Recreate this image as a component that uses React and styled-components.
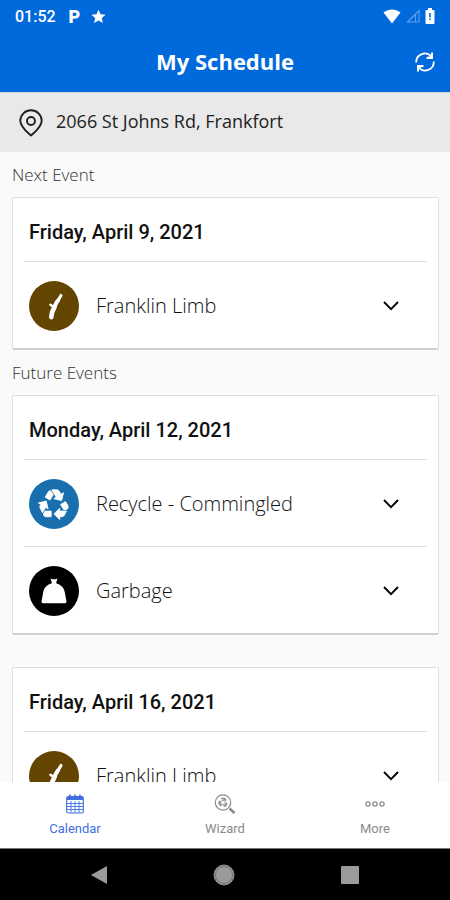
import React from 'react';
import styled, { createGlobalStyle, css } from 'styled-components';
import { MdRecycling } from 'react-icons/md';

const GlobalStyle = createGlobalStyle`
    * {
        box-sizing: border-box;
    }
    body {
        margin: 0;
        background: #fafafa;
        font-family: 'Open Sans', 'Noto Sans', sans-serif;
    }
    h1, h2, h3, p {
        margin: 0;
        padding: 0;
    }
    button {
        padding: 0;
        border: 0;
        background: none;
        color: inherit;
        font: inherit;
        cursor: pointer;
    }
`;

const StarIcon = () => (
    <svg width="15" height="15" viewBox="0 0 24 24" fill="currentColor" aria-hidden="true">
        <path d="M12 1l3.3 7.3 8 .8-6 5.3 1.7 7.9L12 18.2 5 22.3l1.7-7.9-6-5.3 8-.8z" />
    </svg>
);

const WifiIcon = () => (
    <svg width="18" height="15" viewBox="0 0 18 15" fill="currentColor" aria-hidden="true">
        <path d="M0.5 3.6C5.5 -0.4 12.5 -0.4 17.5 3.6L9 14.5z" />
    </svg>
);

const SignalIcon = () => (
    <svg width="14" height="14" viewBox="0 0 14 14" fill="none" stroke="#5c9dec" strokeWidth="1.2" aria-hidden="true">
        <path d="M1.5 13H13V1.5zM9.5 5.5V13" />
    </svg>
);

const BatteryIcon = () => (
    <svg width="10" height="16" viewBox="0 0 10 16" aria-hidden="true">
        <path d="M3 0h4v2h1.5a1 1 0 0 1 1 1v12a1 1 0 0 1-1 1h-7a1 1 0 0 1-1-1V3a1 1 0 0 1 1-1H3z" fill="#fff" />
        <path d="M4.2 5h1.6v4.5H4.2zM4.2 10.5h1.6V12H4.2z" fill="#0069dc" />
    </svg>
);

const RefreshIcon = () => (
    <svg width="20" height="20" viewBox="0 0 20 20" fill="none" stroke="currentColor" strokeWidth="1.8" aria-hidden="true">
        <path d="M1.2 10.5A8.6 8.6 0 0 1 16.5 4.8" />
        <path d="M18.8 9.5A8.6 8.6 0 0 1 3.5 15.2" />
        <path d="M18 0.5V7H11.5V5L14.5 4.5L16 3V0.5zM2 19.5V13H8.5V15L5.5 15.5L4 17V19.5z" fill="currentColor" stroke="none" />
    </svg>
);

const PinIcon = () => (
    <svg width="24" height="28" viewBox="0 0 24 28" fill="none" stroke="currentColor" strokeWidth="1.9" strokeLinejoin="round" aria-hidden="true">
        <path d="M12 26.6C9 23.8 1.3 18 1.3 11.7a10.7 10.4 0 0 1 21.4 0C22.7 18 15 23.8 12 26.6z" />
        <circle cx="12" cy="12" r="4" />
    </svg>
);

const LimbIcon = () => (
    <svg width="30" height="30" viewBox="0 0 30 30" fill="none" stroke="#fff" strokeLinecap="round" strokeLinejoin="round" aria-hidden="true">
        <path d="M12.3 26.2L13 21.5L15.5 16" strokeWidth="4.6" />
        <path d="M15 17L17.5 11.5L19 9.5" strokeWidth="4" />
        <path d="M19 9.5L22 4.5" strokeWidth="3.2" />
        <path d="M14.5 16L11.5 13.8" strokeWidth="2.6" />
    </svg>
);

const GarbageIcon = () => (
    <svg width="26" height="26" viewBox="0 0 26 26" fill="#fff" aria-hidden="true">
        <path d="M9.5 0.5L11.5 1.3H14.5L16.5 0.5L15.5 3.5L15.2 5.3C20.5 7 23.6 10.5 24 15.5L25.5 23.5Q25.6 25.3 24 25.3H2Q0.4 25.3 0.5 23.5L2 15.5C2.4 10.5 5.5 7 10.8 5.3L10.5 3.5z" />
    </svg>
);

const RecycleIcon = styled(MdRecycling)`
    width: 34px;
    height: 34px;
    color: #fff;

    path:not([fill='none']) {
        stroke: #fff;
        stroke-width: 0.6px;
    }
`;

const ChevronIcon = () => (
    <svg width="16" height="10" viewBox="0 0 16 10" fill="none" stroke="currentColor" strokeWidth="1.9" aria-hidden="true">
        <path d="M1 1L8 8.2L15 1" />
    </svg>
);

const CalendarIcon = () => (
    <svg width="18" height="20" viewBox="0 0 18 20" fill="none" stroke="currentColor" aria-hidden="true">
        <rect x="0.7" y="2.5" width="16.6" height="16.5" rx="1.5" strokeWidth="1.1" />
        <path d="M1 3h16v3H1z" fill="currentColor" stroke="none" />
        <path d="M4 0.5v3.5M9 0.5v3.5M14 0.5v3.5" strokeWidth="1.6" />
        <path d="M1 9.5h16M1 12.5h16M1 15.5h16M5 7v11.5M9 7v11.5M13 7v11.5" strokeWidth="0.9" />
    </svg>
);

const WizardIcon = () => (
    <svg width="22" height="20" viewBox="0 0 22 20" fill="none" stroke="currentColor" aria-hidden="true">
        <circle cx="9" cy="8.5" r="7.7" strokeWidth="1.2" />
        <path d="M7.3 4.7h3.4l1.2 2M13 9l-1.7 3H9.5M7.3 12L5 9l1.2-2.2" strokeWidth="1.7" />
        <circle cx="9" cy="8.6" r="2.2" strokeWidth="0.8" />
        <path d="M15.5 14.5L20.5 19" strokeWidth="2.6" />
    </svg>
);

const MoreIcon = () => (
    <svg width="20" height="20" viewBox="0 0 20 20" fill="none" stroke="currentColor" strokeWidth="1.3" aria-hidden="true">
        <circle cx="3" cy="10" r="2.1" />
        <circle cx="10" cy="10" r="2.1" />
        <circle cx="17" cy="10" r="2.1" />
    </svg>
);

const kinds = {
    limb: { color: '#634400', icon: <LimbIcon /> },
    recycle: { color: '#196fae', icon: <RecycleIcon /> },
    garbage: { color: '#000', icon: <GarbageIcon /> },
};

const nextEvents = [
    { date: 'Friday, April 9, 2021', pickups: [{ name: 'Franklin Limb', kind: 'limb' }] },
];

const futureEvents = [
    {
        date: 'Monday, April 12, 2021',
        pickups: [
            { name: 'Recycle - Commingled', kind: 'recycle' },
            { name: 'Garbage', kind: 'garbage' },
        ],
    },
    { date: 'Friday, April 16, 2021', pickups: [{ name: 'Franklin Limb', kind: 'limb' }] },
];

const tabs = [
    { label: 'Calendar', icon: <CalendarIcon />, active: true },
    { label: 'Wizard', icon: <WizardIcon /> },
    { label: 'More', icon: <MoreIcon /> },
];

const EventCard = ({ date, pickups }) => (
    <Card>
        <CardDate>{date}</CardDate>
        {pickups.map(({ name, kind }) => (
            <PickupRow key={name}>
                <Badge $color={kinds[kind].color}>{kinds[kind].icon}</Badge>
                <PickupName>{name}</PickupName>
                <ExpandButton type="button" aria-label={`Show ${name}`}>
                    <ChevronIcon />
                </ExpandButton>
            </PickupRow>
        ))}
    </Card>
);

const App = () => {
    return (
        <Screen>
            <GlobalStyle />
            <TopBar>
                <StatusBar>
                    <Clock>01:52</Clock>
                    <ParkingMark>P</ParkingMark>
                    <StarIcon />
                    <StatusRight>
                        <WifiIcon />
                        <SignalIcon />
                        <BatteryIcon />
                    </StatusRight>
                </StatusBar>
                <TitleRow>
                    <Title>My Schedule</Title>
                    <RefreshButton type="button" aria-label="Refresh">
                        <RefreshIcon />
                    </RefreshButton>
                </TitleRow>
            </TopBar>
            <Address>
                <PinIcon />
                <p>2066 St Johns Rd, Frankfort</p>
            </Address>
            <Content>
                <SectionLabel>Next Event</SectionLabel>
                <CardList>
                    {nextEvents.map((event) => <EventCard key={event.date} {...event} />)}
                </CardList>
                <SectionLabel>Future Events</SectionLabel>
                <CardList>
                    {futureEvents.map((event) => <EventCard key={event.date} {...event} />)}
                </CardList>
            </Content>
            <TabBar>
                {tabs.map(({ label, icon, active }) => (
                    <Tab key={label} href={`#${label.toLowerCase()}`} $active={active}>
                        {icon}
                        <span>{label}</span>
                    </Tab>
                ))}
            </TabBar>
            <SystemBar>
                <button type="button" aria-label="Back">
                    <svg width="16" height="18" viewBox="0 0 16 18"><path d="M16 0v18L0 9z" fill="#9b9b9b" /></svg>
                </button>
                <button type="button" aria-label="Home">
                    <svg width="22" height="22" viewBox="0 0 22 22">
                        <circle cx="11" cy="11" r="10" fill="#9b9b9b" stroke="#8a8a8a" />
                        <circle cx="11" cy="11" r="8.5" fill="none" stroke="#666" strokeWidth="0.8" />
                    </svg>
                </button>
                <button type="button" aria-label="Recent apps">
                    <svg width="18" height="18" viewBox="0 0 18 18"><rect width="18" height="18" rx="1" fill="#9b9b9b" /></svg>
                </button>
            </SystemBar>
        </Screen>
    );
}

export default App;

const Screen = styled.div`
    display: flex;
    flex-direction: column;
    height: 100vh;
    overflow: hidden;
`;

const TopBar = styled.header`
    flex: none;
    background: #0069dc;
    color: #fff;
`;

const StatusBar = styled.div`
    display: flex;
    align-items: center;
    height: 32px;
    padding: 0 15px;
    font-family: Roboto, sans-serif;
`;

const Clock = styled.span`
    font-size: 16px;
    font-weight: 500;
`;

const ParkingMark = styled.span`
    margin: 0 11px 0 13px;
    font-size: 18px;
    font-weight: 900;
`;

const StatusRight = styled.div`
    display: flex;
    align-items: center;
    gap: 5px;
    margin-left: auto;
`;

const TitleRow = styled.div`
    display: grid;
    grid-template-columns: 1fr auto 1fr;
    align-items: center;
    height: 60px;
    padding: 0 15px;
`;

const Title = styled.h1`
    grid-column: 2;
    padding-bottom: 2px;
    font-size: 22px;
    font-weight: 700;
    line-height: 32px;
`;

const RefreshButton = styled.button`
    display: flex;
    justify-self: end;
`;

const Address = styled.section`
    display: flex;
    flex: none;
    align-items: center;
    gap: 13px;
    height: 60px;
    padding: 0 19px;
    border-top: 1px solid #d3d9e2;
    background: #e9e9e9;
    color: #222;
    font-size: 18px;
    line-height: 24px;

    p {
        padding-bottom: 4px;
    }
`;

const Content = styled.main`
    flex: 1;
    min-height: 0;
    padding: 0 11px 0 12px;
    overflow-y: auto;
    scrollbar-width: none;
`;

const SectionLabel = styled.h2`
    padding: 11px 0 10px;
    color: #333;
    font-size: 17px;
    font-weight: 300;
    line-height: 24px;
`;

const CardList = styled.div`
    display: grid;
    gap: 32px;
`;

const Card = styled.article`
    padding: 0 11px;
    border: 1px solid #dedede;
    border-bottom: 2px solid #d0d0d0;
    border-radius: 2px;
    background: #fff;
`;

const CardDate = styled.h3`
    padding: 21px 5px 16px;
    color: #111;
    font-family: Roboto, sans-serif;
    font-size: 20px;
    font-weight: 500;
    line-height: 26px;
`;

const PickupRow = styled.div`
    display: flex;
    align-items: center;
    height: 87px;
    padding: 2px 28px 0 5px;
    border-top: 1px solid #e0e0e0;
`;

const Badge = styled.span`
    display: flex;
    flex: none;
    align-items: center;
    justify-content: center;
    width: 50px;
    height: 50px;
    border-radius: 50%;
    background: ${({ $color }) => $color};
`;

const PickupName = styled.p`
    flex: 1;
    margin-left: 17px;
    color: #111;
    font-size: 20px;
    font-weight: 300;
    line-height: 28px;
`;

const ExpandButton = styled.button`
    display: flex;
`;

const TabBar = styled.nav`
    display: flex;
    flex: none;
    height: 67px;
    border-bottom: 1px solid #777;
    background: #fff;
`;

const Tab = styled.a`
    display: flex;
    flex: 1;
    flex-direction: column;
    align-items: center;
    gap: 7px;
    padding-top: 12px;
    color: #8a8a8a;
    font-family: Roboto, sans-serif;
    font-size: 13px;
    line-height: 16px;
    text-decoration: none;

    ${({ $active }) => $active && css`
        color: #3f6fe0;
    `}
`;

const SystemBar = styled.footer`
    display: flex;
    flex: none;
    align-items: center;
    justify-content: center;
    gap: 106px;
    height: 51px;
    background: #000;

    button {
        display: flex;
    }
`;
